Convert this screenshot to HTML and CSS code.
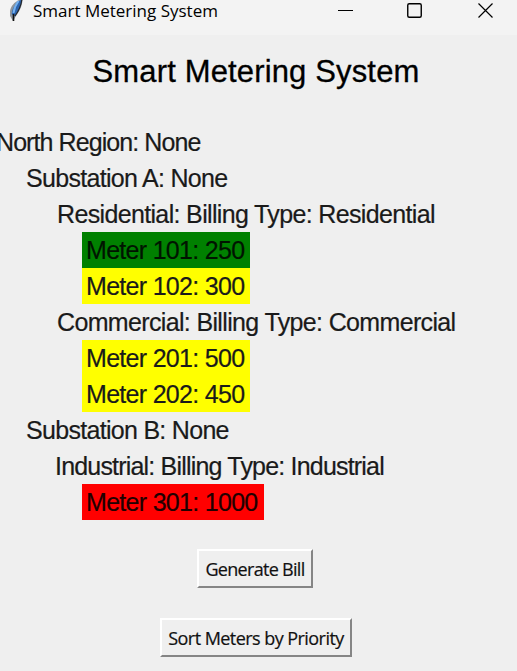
FILE: index.html
```html
<!DOCTYPE html>
<html lang="en">
<head>
<meta charset="utf-8">
<title>Smart Metering System</title>
<link rel="stylesheet" href="styles.css">
</head>
<body>
<header class="titlebar">
  <svg class="feather" width="18" height="24" viewBox="0 0 18 24">
    <path d="M13 -1 C8 1 3 5 2 11 L2 16 L5 21 L8 16 C11 12 14.5 6 14.5 -1Z" fill="#8f959b"/>
    <path d="M12.5 0 C8 3 4 8 3.7 14 L6 16.5 C10 12 13 6 13.5 0Z" fill="#2c64ae"/>
    <path d="M10.5 1 C7.5 5 6 9 5.5 13" fill="none" stroke="#75b1ef" stroke-width="2"/>
    <path d="M13.8 0 C13 6 10 12 7 16" fill="none" stroke="#20242a" stroke-width="1.2"/>
    <path d="M5.5 14V21" stroke="#111" stroke-width="1.6"/>
  </svg>
  <span class="caption">Smart Metering System</span>
  <svg class="controls" width="180" height="35" viewBox="0 0 180 35" fill="none" stroke="#000">
    <path d="M1 10.5H16" stroke-width="1"/>
    <rect x="70.75" y="3.75" width="13.5" height="13.5" rx="1.5" stroke-width="1.4"/>
    <path d="M141.5 3.5L155.5 17.5M155.5 3.5L141.5 17.5" stroke-width="1.2"/>
  </svg>
</header>
<main>
  <h1><span>Smart Metering System</span></h1>
  <ul class="tree">
    <li class="region"><span>North Region: None</span></li>
    <li class="substation"><span>Substation A: None</span></li>
    <li class="feeder"><span>Residential: Billing Type: Residential</span></li>
    <li class="meter"><span class="low">Meter 101: 250</span></li>
    <li class="meter"><span class="mid">Meter 102: 300</span></li>
    <li class="feeder"><span>Commercial: Billing Type: Commercial</span></li>
    <li class="meter"><span class="mid">Meter 201: 500</span></li>
    <li class="meter"><span class="mid">Meter 202: 450</span></li>
    <li class="substation"><span>Substation B: None</span></li>
    <li class="feeder industrial"><span>Industrial: Billing Type: Industrial</span></li>
    <li class="meter"><span class="high">Meter 301: 1000</span></li>
  </ul>
  <div class="actions">
    <button class="generate">Generate Bill</button>
    <button class="sort">Sort Meters by Priority</button>
  </div>
</main>
</body>
</html>
```
FILE: styles.css
```css
* { box-sizing: border-box; }
body {
  margin: 0;
  height: 671px;
  overflow: hidden;
  background: #efefef;
  color: #000;
  font-family: "Liberation Sans", Arial, sans-serif;
}
.titlebar {
  display: flex;
  height: 35px;
  background: #f3f3f3;
}
.feather { margin-left: 8px; flex: none; }
.caption {
  margin-left: 7px;
  font: 17px/22px "Open Sans", "Noto Sans", sans-serif;
  white-space: nowrap;
}
.controls { margin-left: auto; flex: none; }
h1 {
  margin: 0;
  padding: 19px 5px 0 0;
  height: 89px;
  font-size: 31px;
  line-height: 36px;
  font-weight: 400;
  letter-spacing: 0.15px;
  text-align: center;
  -webkit-text-stroke: 0.3px;
}
.tree {
  margin: 0;
  padding: 0;
  list-style: none;
  font-size: 25px;
  line-height: 36px;
  white-space: nowrap;
}
.tree li { display: flex; height: 36px; }
.tree span { color: #1a1a1a; letter-spacing: -0.7px; -webkit-text-stroke: 0.2px; }
.tree .region { margin-left: -4px; }
.tree .region span { letter-spacing: -0.92px; }
.substation { padding-left: 26px; }
.feeder { padding-left: 57px; }
.tree .feeder span { letter-spacing: -0.65px; }
.tree .industrial { padding-left: 55px; }
.tree .industrial span { letter-spacing: -0.81px; }
.meter { padding-left: 82px; }
.tree .meter span { padding-left: 4px; width: 168px; height: 36px; }
.tree .low { background: #008000; color: #001400; }
.tree .mid { background: #ffff00; }
.tree .high { background: #ff0000; color: #200000; }
.tree .meter .high { width: 182px; }
.actions {
  display: flex;
  flex-direction: column;
  align-items: center;
  gap: 30px;
  padding: 29px 5px 0 0;
}
button {
  height: 39px;
  padding: 0;
  border: 2px solid;
  border-color: #fff #858585 #858585 #fff;
  background: #efefef;
  color: #111;
  font: 18px/34px "Open Sans", "Noto Sans", sans-serif;
  white-space: nowrap;
  -webkit-text-stroke: 0.2px;
}
.generate { width: 116px; margin-left: -2px; letter-spacing: -0.7px; }
.sort { width: 192px; letter-spacing: -0.55px; }
```
